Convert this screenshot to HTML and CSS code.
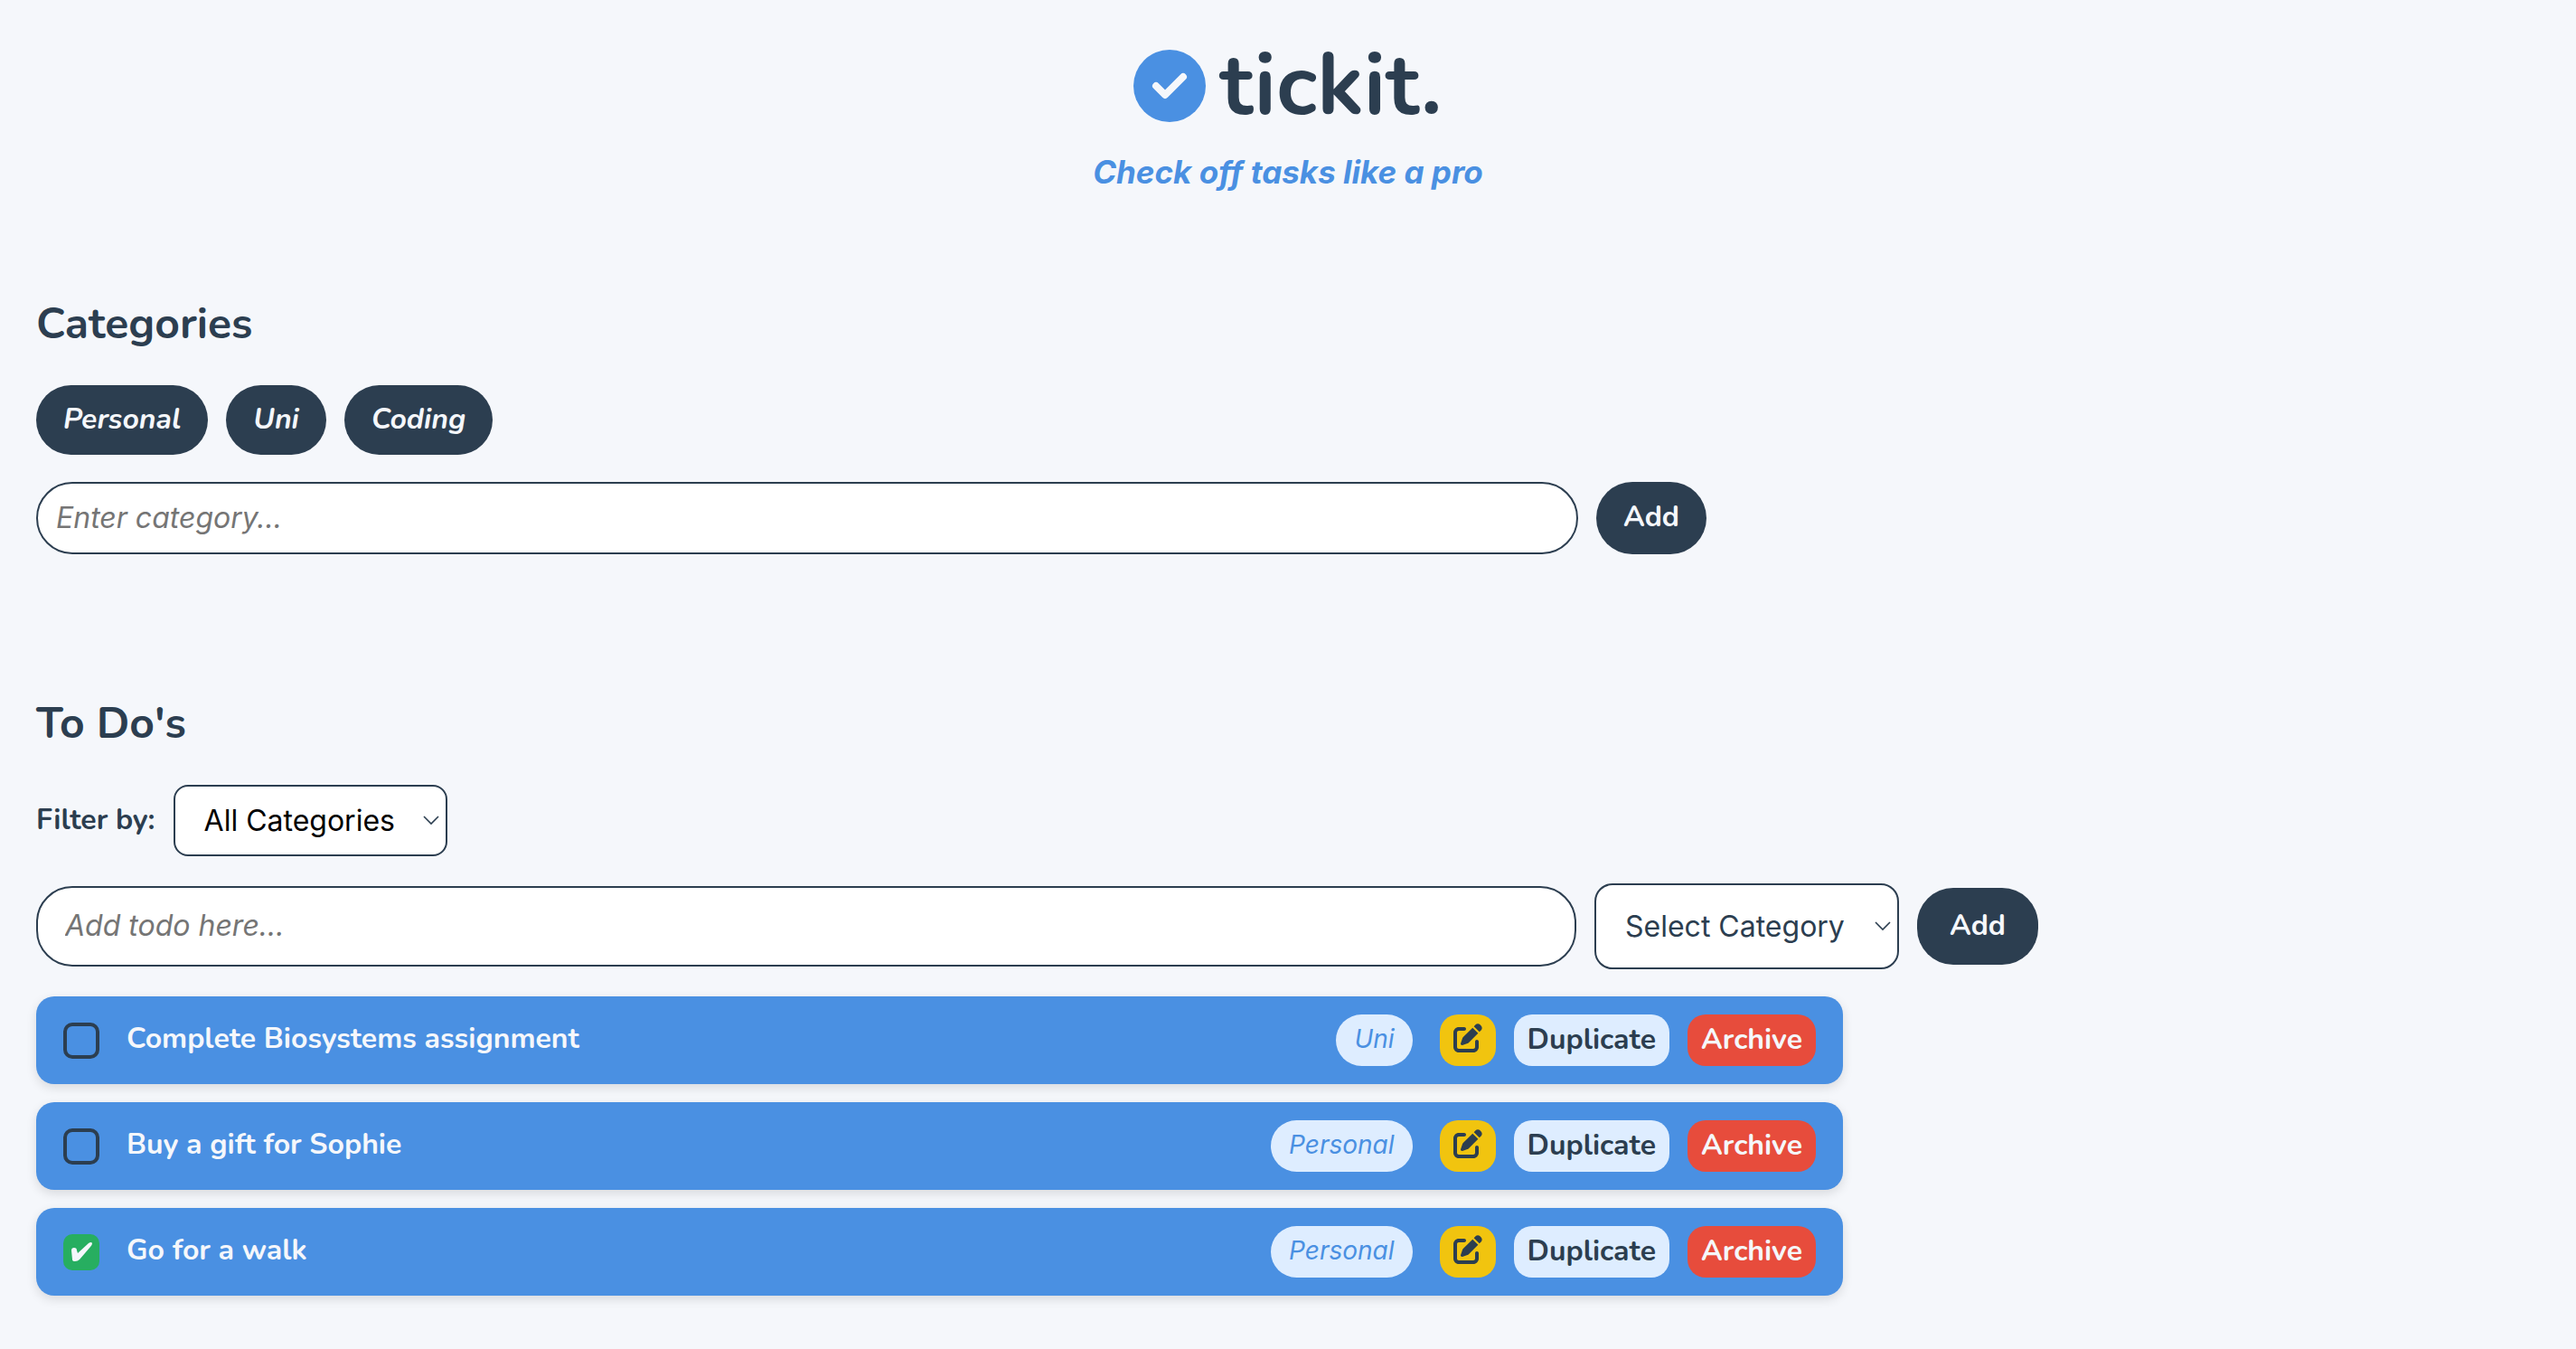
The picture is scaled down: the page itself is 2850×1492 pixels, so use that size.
FILE: index.html
```html
<!DOCTYPE html>
<html lang="en">
<head>
<meta charset="utf-8">
<meta name="viewport" content="width=device-width, initial-scale=1">
<title>tickit.</title>
<link rel="stylesheet" href="styles.css">
</head>
<body>
<svg class="sprite" aria-hidden="true">
  <symbol id="icon-edit" viewBox="0 0 512 512"><path d="M471.6 21.7c-21.9-21.9-57.3-21.9-79.2 0L362.300 51.700l97.900 97.900 30.100-30.100c21.900-21.900 21.900-57.300 0-79.200L471.600 21.700zm-299.200 220c-6.100 6.100-10.800 13.600-13.500 21.900l-29.600 88.800c-2.900 8.600-.6 18.100 5.800 24.600s15.900 8.700 24.600 5.800l88.800-29.600c8.200-2.700 15.700-7.400 21.900-13.500L437.700 172.300 339.700 74.300 172.400 241.700zM96 64C43 64 0 107 0 160V416c0 53 43 96 96 96H352c53 0 96-43 96-96V320c0-17.700-14.300-32-32-32s-32 14.300-32 32v96c0 17.700-14.300 32-32 32H96c-17.700 0-32-14.300-32-32V160c0-17.700 14.300-32 32-32h96c17.700 0 32-14.300 32-32s-14.300-32-32-32H96z"/></symbol>
</svg>
<header class="header">
  <h1 class="logo">
    <svg class="logo-mark" viewBox="0 0 80 80" aria-hidden="true"><circle cx="40" cy="40" r="40"/><path d="M25 40l10 10 20-20"/></svg>
    <span>tickit.</span>
  </h1>
  <p class="tagline">Check off tasks like a pro</p>
</header>
<main class="main">
  <section class="categories">
    <h2 class="title">Categories</h2>
    <div class="pills">
      <button class="pill" type="button">Personal</button>
      <button class="pill" type="button">Uni</button>
      <button class="pill" type="button">Coding</button>
    </div>
    <form class="row">
      <input class="field" type="text" placeholder="Enter category..." aria-label="Category">
      <button class="add" type="button">Add</button>
    </form>
  </section>
  <section class="todos">
    <h2 class="title">To Do's</h2>
    <div class="filter">
      <label class="filter-label" for="filter">Filter by:</label>
      <select class="select" id="filter"><option>All Categories</option><option>Personal</option><option>Uni</option><option>Coding</option></select>
    </div>
    <form class="row">
      <input class="field field-todo" type="text" placeholder="Add todo here..." aria-label="Todo">
      <select class="select select-category" aria-label="Category"><option>Select Category</option><option>Personal</option><option>Uni</option><option>Coding</option></select>
      <button class="add add-todo" type="button">Add</button>
    </form>
    <ul class="list">
      <li class="item">
        <input class="check" type="checkbox" id="todo-1">
        <label class="item-text" for="todo-1">Complete Biosystems assignment</label>
        <span class="tag">Uni</span>
        <button class="action edit" type="button" aria-label="Edit"><svg class="icon" aria-hidden="true"><use href="#icon-edit"/></svg></button>
        <button class="action duplicate" type="button">Duplicate</button>
        <button class="action archive" type="button">Archive</button>
      </li>
      <li class="item">
        <input class="check" type="checkbox" id="todo-2">
        <label class="item-text" for="todo-2">Buy a gift for Sophie</label>
        <span class="tag">Personal</span>
        <button class="action edit" type="button" aria-label="Edit"><svg class="icon" aria-hidden="true"><use href="#icon-edit"/></svg></button>
        <button class="action duplicate" type="button">Duplicate</button>
        <button class="action archive" type="button">Archive</button>
      </li>
      <li class="item">
        <input class="check" type="checkbox" id="todo-3" checked>
        <label class="item-text" for="todo-3">Go for a walk</label>
        <span class="tag">Personal</span>
        <button class="action edit" type="button" aria-label="Edit"><svg class="icon" aria-hidden="true"><use href="#icon-edit"/></svg></button>
        <button class="action duplicate" type="button">Duplicate</button>
        <button class="action archive" type="button">Archive</button>
      </li>
    </ul>
  </section>
</main>
</body>
</html>
```
FILE: styles.css
```css
* { box-sizing: border-box; }
body { margin: 0; background: #f5f7fb; color: #2c3e50; font-family: Nunito, Lato, sans-serif; font-size: 32px; line-height: 40px; }
.sprite { display: none; }
h1, h2, p, ul { margin: 0; padding: 0; }
button, input, select { font: inherit; margin: 0; }
.header { display: flex; flex-direction: column; align-items: center; padding-top: 32px; }
.logo { display: flex; align-items: center; gap: 15px; font-size: 96px; line-height: 126px; font-weight: 700; }
.logo-mark { width: 80px; height: 80px; fill: #4a90e2; }
.logo-mark path { fill: none; stroke: #f5f7fb; stroke-width: 8; stroke-linecap: round; stroke-linejoin: round; }
.tagline { margin-top: 10px; font: italic 700 35px/44px Inter, sans-serif; color: #4a90e2; }
.main { padding: 114px 40px 40px; }
.title { font-size: 48px; line-height: 64px; font-weight: 700; }
.pills { display: flex; gap: 20px; margin: 36px 0 30px; }
.pill, .add { border: 0; border-radius: 40px; background: #2c3e50; color: #f5f7fb; font-weight: 700; padding: 0 30px 2px; }
.pill { height: 77px; font-style: italic; }
.row { display: flex; align-items: center; gap: 20px; }
.field { width: calc(60% + 44px); height: 80px; padding: 0 20px 2px; border: 2px solid #2c3e50; border-radius: 40px; background: #fff; font-family: Inter, sans-serif; font-size: 32px; color: #2c3e50; }
.field::placeholder { color: #757575; font-style: italic; }
.add { height: 80px; }
.todos { margin-top: 155px; }
.filter { display: flex; align-items: center; gap: 20px; margin: 36px 0 30px; }
.filter-label { padding-bottom: 2px; font-weight: 700; }
.select { height: 79px; padding: 0 55px 0 32px; border: 2px solid #2c3e50; border-radius: 16px; appearance: none; color: #000; font-family: Inter, sans-serif; background: #fff url("data:image/svg+xml,%3Csvg xmlns='http://www.w3.org/2000/svg' width='18' height='12' fill='none' stroke='%232c3e50' stroke-width='1.6'%3E%3Cpath d='M1 1l8 8 8-8'/%3E%3C/svg%3E") no-repeat right 7px center; }
.field-todo { width: calc(60% + 42px); height: 89px; padding: 0 30px 2px; }
.select-category { height: 95px; padding-right: 58px; border-radius: 20px; color: #2c3e50; }
.add-todo { height: 85px; padding: 0 36px 2px; }
.list { list-style: none; display: flex; flex-direction: column; gap: 20px; max-width: 1999px; margin-top: 30px; }
.item { display: flex; align-items: center; padding: 20px 30px; gap: 20px; border-radius: 20px; background: #4a90e2; box-shadow: 0 4px 12px rgba(0, 0, 0, .12); }
.check { appearance: none; width: 40px; height: 40px; border: 4px solid #2c3e50; border-radius: 10px; }
.check:checked { border: 0; background: #27ae60 url("data:image/svg+xml,%3Csvg xmlns='http://www.w3.org/2000/svg' width='40' height='40' fill='%23f5f7fb'%3E%3Cpath d='M9 18Q9 15 12 15Q15 15 15 18L16 21L28 10Q31 8 32 10Q32 12 30 14L18 28Q16 30 13 30Q10 30 10 28Z'/%3E%3C/svg%3E"); }
.item-text { flex: 1; margin-left: 10px; padding-bottom: 4px; color: #f5f7fb; font-weight: 700; }
.tag { margin-right: 10px; padding: 7px 20px 9px; border-radius: 30px; background: #deedff; color: #4a90e2; font: italic 400 28px/41px Inter, sans-serif; }
.action { height: 57px; border: 0; border-radius: 20px; padding: 0 15px 2px; font-weight: 700; }
.edit { padding-bottom: 6px; background: #f1c40f; color: #2c3e50; }
.icon { display: block; width: 32px; height: 32px; fill: currentColor; }
.duplicate { background: #deedff; color: #2c3e50; }
.archive { background: #e74c3c; color: #f5f7fb; }
```
